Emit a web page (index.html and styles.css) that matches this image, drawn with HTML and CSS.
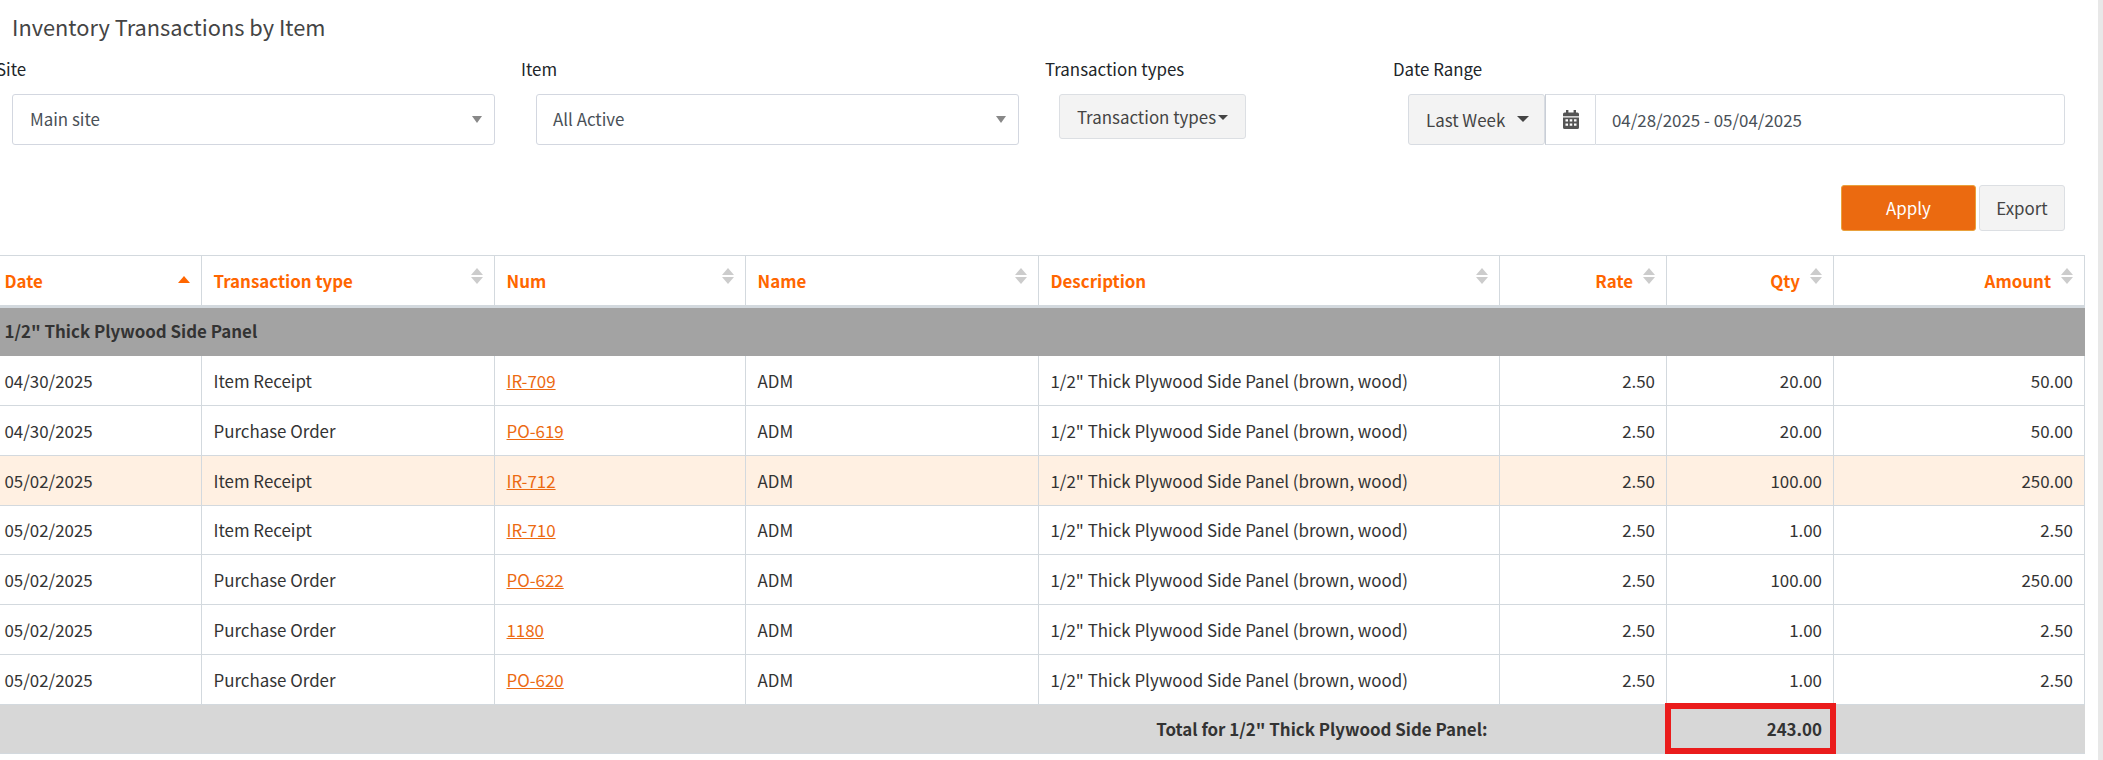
FILE: index.html
```html
<!DOCTYPE html>
<html lang="en">
<head>
<meta charset="utf-8">
<title>Inventory Transactions by Item</title>
<link rel="stylesheet" href="styles.css">
</head>
<body>
<div class="viewport">
  <main class="content">
    <h1 class="title">Inventory Transactions by Item</h1>
    <section class="filters">
      <div class="field">
        <label class="label">Site</label>
        <div class="select"><span>Main site</span><i class="arrow"></i></div>
      </div>
      <div class="field">
        <label class="label">Item</label>
        <div class="select"><span>All Active</span><i class="arrow"></i></div>
      </div>
      <div class="field">
        <label class="label">Transaction types</label>
        <div class="btn btn-multi"><span>Transaction types</span><i class="caret"></i></div>
      </div>
      <div class="field">
        <label class="label">Date Range</label>
        <div class="range">
          <div class="range-preset"><span>Last Week</span><i class="caret caret-lg"></i></div>
          <div class="range-icon">
            <svg width="16" height="19" viewBox="0 0 16 19"><path fill="#555" d="M3 0h2.4v2.4h5.2V0H13v2.4h1.4A1.6 1.6 0 0 1 16 4v2.2H0V4a1.6 1.6 0 0 1 1.6-1.6H3zM0 7.4h16v10A1.6 1.6 0 0 1 14.400 19H1.600A1.600 1.600 0 0 1 0 17.400z"/><path fill="#fff" d="M2.500 9.200h2.500v2.300H2.500zM6.750 9.200h2.500v2.300h-2.500zM11 9.200h2.500v2.300H11zM2.500 13.500h2.500v2.300H2.500zM6.750 13.500h2.500v2.300h-2.500zM11 13.500h2.500v2.300H11z"/></svg>
          </div>
          <div class="range-input">04/28/2025 - 05/04/2025</div>
        </div>
      </div>
    </section>
    <div class="actions">
      <div class="btn btn-apply">Apply</div>
      <div class="btn btn-export">Export</div>
    </div>
    <table class="report">
      <colgroup>
        <col class="c-date"><col class="c-type"><col class="c-num"><col class="c-name"><col class="c-desc"><col class="c-rate"><col class="c-qty"><col class="c-amount">
      </colgroup>
      <thead>
        <tr>
          <th>Date<i class="sort-active"></i></th>
          <th>Transaction type<i class="sort"></i></th>
          <th>Num<i class="sort"></i></th>
          <th>Name<i class="sort"></i></th>
          <th>Description<i class="sort"></i></th>
          <th class="num">Rate<i class="sort"></i></th>
          <th class="num">Qty<i class="sort"></i></th>
          <th class="num">Amount<i class="sort"></i></th>
        </tr>
      </thead>
      <tbody>
        <tr class="group"><td colspan="8">1/2" Thick Plywood Side Panel</td></tr>
        <tr><td>04/30/2025</td><td>Item Receipt</td><td><a href="#">IR-709</a></td><td>ADM</td><td>1/2" Thick Plywood Side Panel (brown, wood)</td><td class="num">2.50</td><td class="num">20.00</td><td class="num">50.00</td></tr>
        <tr><td>04/30/2025</td><td>Purchase Order</td><td><a href="#">PO-619</a></td><td>ADM</td><td>1/2" Thick Plywood Side Panel (brown, wood)</td><td class="num">2.50</td><td class="num">20.00</td><td class="num">50.00</td></tr>
        <tr class="hl"><td>05/02/2025</td><td>Item Receipt</td><td><a href="#">IR-712</a></td><td>ADM</td><td>1/2" Thick Plywood Side Panel (brown, wood)</td><td class="num">2.50</td><td class="num">100.00</td><td class="num">250.00</td></tr>
        <tr><td>05/02/2025</td><td>Item Receipt</td><td><a href="#">IR-710</a></td><td>ADM</td><td>1/2" Thick Plywood Side Panel (brown, wood)</td><td class="num">2.50</td><td class="num">1.00</td><td class="num">2.50</td></tr>
        <tr><td>05/02/2025</td><td>Purchase Order</td><td><a href="#">PO-622</a></td><td>ADM</td><td>1/2" Thick Plywood Side Panel (brown, wood)</td><td class="num">2.50</td><td class="num">100.00</td><td class="num">250.00</td></tr>
        <tr><td>05/02/2025</td><td>Purchase Order</td><td><a href="#">1180</a></td><td>ADM</td><td>1/2" Thick Plywood Side Panel (brown, wood)</td><td class="num">2.50</td><td class="num">1.00</td><td class="num">2.50</td></tr>
        <tr><td>05/02/2025</td><td>Purchase Order</td><td><a href="#">PO-620</a></td><td>ADM</td><td>1/2" Thick Plywood Side Panel (brown, wood)</td><td class="num">2.50</td><td class="num">1.00</td><td class="num">2.50</td></tr>
        <tr class="total">
          <td colspan="5" class="total-label">Total for 1/2" Thick Plywood Side Panel:</td>
          <td></td>
          <td class="num total-cell">243.00<i class="callout"></i></td>
          <td></td>
        </tr>
      </tbody>
    </table>
  </main>
  <div class="scrollbar"></div>
</div>
</body>
</html>
```
FILE: styles.css
```css
* { box-sizing: border-box; }
html, body { margin: 0; height: 100%; }
body {
  background: #fff;
  color: #333;
  font-family: "Noto Sans CJK SC", "Noto Sans", sans-serif;
  font-size: 16.9px;
  overflow: hidden;
}
.viewport { display: flex; height: 760px; overflow: hidden; }
.content { flex: 0 0 2092px; margin-left: -8px; width: 2092px; }
.scrollbar { flex: 0 0 5px; margin-left: 14px; background: #e8e8e8; }

.title {
  margin: 0;
  padding: 13px 0 0 20px;
  height: 57px;
  font-size: 21.8px;
  font-weight: 400;
  line-height: 28px;
  color: #444;
}

.filters {
  display: grid;
  grid-template-columns: 525px 524px 348px 686px;
  padding-left: 4px;
}
.label { display: block; height: 37px; line-height: 24px; color: #212529; }
.select {
  display: flex;
  align-items: center;
  justify-content: space-between;
  width: 483px;
  height: 50.5px;
  margin-left: 16px;
  padding: 0 12px 2px 17px;
  border: 1px solid #d3d7e0;
  border-radius: 3px;
  color: #495057;
}
.field:nth-child(2) .select { margin-left: 15px; padding-left: 16px; }
.arrow {
  width: 0; height: 0;
  margin-top: 2px;
  border-left: 5px solid transparent;
  border-right: 5px solid transparent;
  border-top: 7px solid #888;
}
.btn {
  display: flex;
  align-items: center;
  justify-content: center;
  background: #f3f3f3;
  border: 1px solid #dcdfe3;
  border-radius: 3px;
  color: #444;
}
.btn-multi { width: 187px; height: 45px; margin-left: 14px; gap: 2px; }
.caret {
  display: block;
  width: 0; height: 0;
  margin-top: 2px;
  border-left: 5px solid transparent;
  border-right: 5px solid transparent;
  border-top: 5px solid #444;
}
.caret-lg { border-left-width: 6px; border-right-width: 6px; border-top-width: 6px; margin: 0; }
.range { display: flex; height: 50.5px; margin-left: 15px; width: 657px; }
.range-preset {
  display: flex;
  align-items: center;
  justify-content: space-between;
  width: 137px;
  padding: 0 15px 0 17px;
  background: #f3f3f3;
  border: 1px solid #d8dce2;
  border-radius: 3px;
  color: #444;
}
.range-icon {
  display: flex;
  align-items: center;
  justify-content: center;
  width: 50px;
  border: 1px solid #d8dce2;
  border-right: 0;
  border-left-color: #c9ced6;
}
.range-input {
  display: flex;
  align-items: center;
  flex: 1;
  padding-left: 16px;
  border: 1px solid #d8dce2;
  border-radius: 0 3px 3px 0;
  color: #495057;
}

.actions {
  display: flex;
  justify-content: flex-end;
  gap: 3px;
  height: 46px;
  margin-top: 40px;
  padding-right: 19px;
}
.btn-apply { width: 135px; height: 46px; background: #eb6a10; border-color: #e9a13c; color: #fff; }
.btn-export { width: 86px; height: 46px; }

.report {
  width: 2092px;
  margin-top: 24px;
  border-collapse: collapse;
  table-layout: fixed;
  border-right: 1px solid #d3d9de;
  border-top: 1px solid #d3d9de;
}
.c-date { width: 209px; }
.c-type { width: 293px; }
.c-num { width: 251px; }
.c-name { width: 293px; }
.c-desc { width: 461px; }
.c-rate { width: 167px; }
.c-qty { width: 167px; }
.c-amount { width: 251px; }

.report th, .report td {
  padding: 1px 11.5px 0;
  height: 49.75px;
  border: 1px solid #d3d9de;
  text-align: left;
  font-weight: 400;
  line-height: 24px;
  white-space: nowrap;
}
.report th {
  position: relative;
  height: 51px;
  padding-right: 33px;
  border-top: 0;
  border-bottom: 3px solid #d3d9de;
  color: #ff6600;
  font-weight: 700;
}
.report th.num, .report td.num { text-align: right; }
.report td.num { padding-right: 11px; }
.report th.num { padding-right: 33px; }
.report a { color: #ec6a12; text-decoration: underline; }

.sort {
  position: absolute;
  top: 12px;
  right: 11px;
  display: block;
  width: 12px;
  height: 16px;
}
.sort::before, .sort::after {
  content: "";
  position: absolute;
  left: 0;
  width: 0; height: 0;
  border-left: 6px solid transparent;
  border-right: 6px solid transparent;
}
.sort::before { top: 0; border-bottom: 7px solid #ccc; }
.sort::after { bottom: 0; border-top: 7px solid #ccc; }
.sort-active {
  position: absolute;
  top: 20px;
  right: 11px;
  width: 0; height: 0;
  border-left: 6px solid transparent;
  border-right: 6px solid transparent;
  border-bottom: 7px solid #ff6600;
}

.report .group td { padding-top: 0; background: #a3a3a3; border-color: #a3a3a3; font-weight: 700; color: #333; }
.hl td { background: #fff0e2; }
.report .total td {
  background: #d7d7d7;
  border-color: #d7d7d7;
  border-bottom-color: #d3d9de;
  font-weight: 700;
  color: #333;
}
.report .total-label { text-align: right; }
.total-cell { position: relative; }
.callout {
  position: absolute;
  inset: -2px -3px -1px -2px;
  border: 6px solid #ea1c1c;
}
```
